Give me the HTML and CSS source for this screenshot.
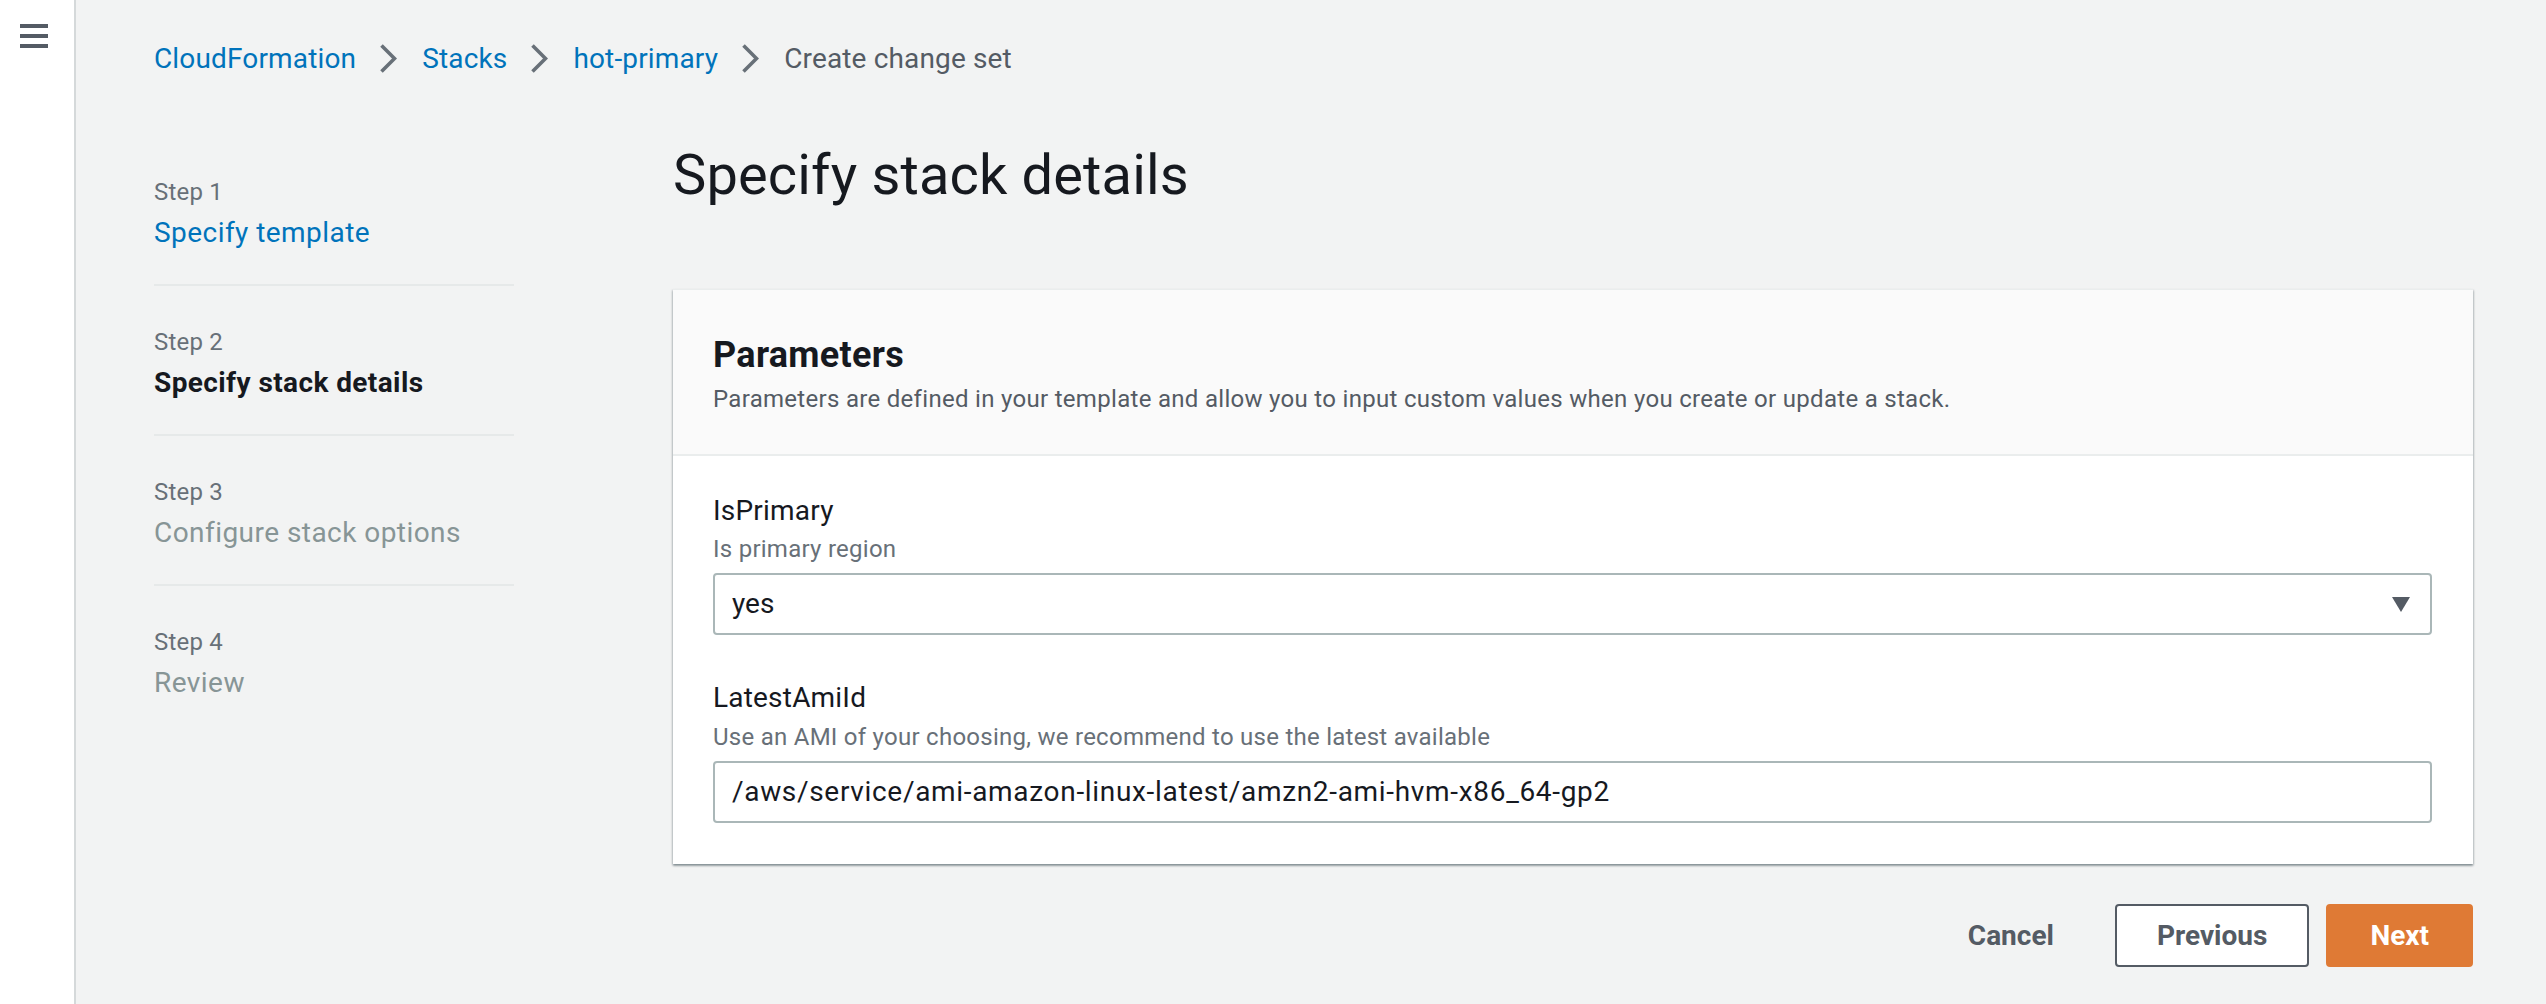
FILE: index.html
```html
<!DOCTYPE html>
<html lang="en">
<head>
<meta charset="utf-8">
<title>Create change set - CloudFormation</title>
<link rel="stylesheet" href="styles.css">
</head>
<body>
<div class="app">
  <nav class="sidenav">
    <svg class="hamburger" width="28" height="24" viewBox="0 0 28 24" aria-label="Open navigation">
      <rect x="0" y="0" width="28" height="4" fill="#545b64"/>
      <rect x="0" y="10" width="28" height="4" fill="#545b64"/>
      <rect x="0" y="20" width="28" height="4" fill="#545b64"/>
    </svg>
  </nav>
  <main class="main">
    <div class="breadcrumbs">
      <a class="crumb-link" href="#">CloudFormation</a>
      <svg class="chevron" width="17" height="29" viewBox="0 0 17 29"><path d="M1.5 1.5 L14.5 14.5 L1.5 27.5" fill="none" stroke="#687078" stroke-width="3.6"/></svg>
      <a class="crumb-link" href="#">Stacks</a>
      <svg class="chevron" width="17" height="29" viewBox="0 0 17 29"><path d="M1.5 1.5 L14.5 14.5 L1.5 27.5" fill="none" stroke="#687078" stroke-width="3.6"/></svg>
      <a class="crumb-link" href="#">hot-primary</a>
      <svg class="chevron" width="17" height="29" viewBox="0 0 17 29"><path d="M1.5 1.5 L14.5 14.5 L1.5 27.5" fill="none" stroke="#687078" stroke-width="3.6"/></svg>
      <span class="crumb-current">Create change set</span>
    </div>

    <div class="layout">
      <ol class="steps">
        <li class="step">
          <div class="step-label">Step 1</div>
          <a class="step-name step-link" href="#">Specify template</a>
        </li>
        <li class="step">
          <div class="step-label">Step 2</div>
          <div class="step-name step-active">Specify stack details</div>
        </li>
        <li class="step">
          <div class="step-label">Step 3</div>
          <div class="step-name step-disabled">Configure stack options</div>
        </li>
        <li class="step">
          <div class="step-label">Step 4</div>
          <div class="step-name step-disabled">Review</div>
        </li>
      </ol>

      <div class="content">
        <h1 class="page-title">Specify stack details</h1>

        <section class="card">
          <header class="card-header">
            <h2 class="card-title">Parameters</h2>
            <p class="card-desc">Parameters are defined in your template and allow you to input custom values when you create or update a stack.</p>
          </header>
          <div class="card-body">
            <div class="field">
              <div class="field-label">IsPrimary</div>
              <div class="field-desc">Is primary region</div>
              <div class="control select">
                <span class="control-value">yes</span>
                <svg class="caret" width="18" height="15" viewBox="0 0 18 15"><path d="M0 0 H18 L9 15 Z" fill="#545b64"/></svg>
              </div>
            </div>
            <div class="field field-second">
              <div class="field-label">LatestAmiId</div>
              <div class="field-desc field-desc-second">Use an AMI of your choosing, we recommend to use the latest available</div>
              <div class="control">
                <span class="control-value control-path">/aws/service/ami-amazon-linux-latest/amzn2-ami-hvm-x86_64-gp2</span>
              </div>
            </div>
          </div>
        </section>

        <div class="actions">
          <button class="btn btn-link" type="button">Cancel</button>
          <button class="btn btn-normal" type="button">Previous</button>
          <button class="btn btn-primary" type="button">Next</button>
        </div>
      </div>
    </div>
  </main>
</div>
</body>
</html>
```

FILE: styles.css
```css
* {
  box-sizing: border-box;
}

html, body {
  margin: 0;
  padding: 0;
}

body {
  background: #f2f3f3;
  font-family: Roboto, "Liberation Sans", Arial, sans-serif;
  color: #16191f;
}

.app {
  display: flex;
  min-height: 1004px;
}

.sidenav {
  flex: 0 0 76px;
  width: 76px;
  background: #ffffff;
  border-right: 2px solid #d5d9da;
  padding: 24px 0 0 20px;
}

.hamburger {
  display: block;
}

.main {
  flex: 1;
  padding: 39px 73px 0 78px;
}

.breadcrumbs {
  display: flex;
  align-items: center;
  height: 40px;
  font-size: 28px;
  line-height: 40px;
  letter-spacing: 0.15px;
}

.crumb-link {
  color: #0073bb;
  text-decoration: none;
}

.crumb-current {
  color: #545b64;
}

.chevron {
  display: block;
  margin: 0 25px 2px 24px;
}

.layout {
  display: grid;
  grid-template-columns: 360px 1fr;
  column-gap: 159px;
  margin-top: 57px;
}

.steps {
  list-style: none;
  margin: 0;
  padding: 0;
}

.step {
  padding: 40px 0 31px;
  border-bottom: 2px solid #e6e9e9;
}

.step:last-child {
  border-bottom: none;
}

.step-label {
  font-size: 24px;
  line-height: 32px;
  color: #687078;
  margin-bottom: 5px;
  letter-spacing: 0.2px;
}

.step-name {
  display: block;
  font-size: 28px;
  line-height: 40px;
  letter-spacing: 0.45px;
}

.step-link {
  color: #0073bb;
  text-decoration: none;
}

.step-active {
  font-weight: 700;
  color: #16191f;
  letter-spacing: 0.4px;
}

.step-disabled {
  color: #879596;
}

.content {
  min-width: 0;
}

.page-title {
  margin: 7px 0 0;
  font-size: 56px;
  line-height: 64px;
  font-weight: 400;
  color: #16191f;
  letter-spacing: 0.15px;
}

.card {
  margin-top: 82px;
  background: #ffffff;
  border-top: 1px solid #eaeded;
  box-shadow: 0 2px 2px 0 rgba(0, 28, 36, 0.3), 1px 1px 2px 0 rgba(0, 28, 36, 0.15), -1px 1px 2px 0 rgba(0, 28, 36, 0.15);
}

.card-header {
  background: #fafafa;
  padding: 43px 40px 39px;
  border-bottom: 2px solid #eaeded;
}

.card-title {
  margin: 0;
  font-size: 36px;
  line-height: 44px;
  font-weight: 700;
  color: #16191f;
  letter-spacing: 0.3px;
}

.card-desc {
  margin: 6px 0 0;
  font-size: 24px;
  line-height: 32px;
  color: #545b64;
  letter-spacing: 0.3px;
}

.card-body {
  padding: 35px 41px 41px 40px;
}

.field-second {
  margin-top: 43px;
}

.field-label {
  font-size: 28px;
  line-height: 40px;
  color: #16191f;
  letter-spacing: 0.2px;
}

.field-desc {
  margin-top: 2px;
  font-size: 24px;
  line-height: 32px;
  color: #687078;
  letter-spacing: 0.26px;
}

.field-desc-second {
  margin-top: 3px;
}

.control {
  margin-top: 8px;
  height: 62px;
  display: flex;
  align-items: center;
  justify-content: space-between;
  border: 2px solid #aab7b8;
  border-radius: 4px;
  background: #ffffff;
  padding: 0 20px 0 17px;
  font-size: 28px;
  line-height: 40px;
  color: #16191f;
}

.control-path {
  letter-spacing: 0.68px;
}

.caret {
  display: block;
  flex: 0 0 auto;
}

.actions {
  display: flex;
  justify-content: flex-end;
  gap: 17px;
  margin-top: 40px;
}

.btn {
  height: 63px;
  border: 2px solid transparent;
  border-radius: 4px;
  font-family: Roboto, "Liberation Sans", Arial, sans-serif;
  font-size: 28px;
  font-weight: 700;
  line-height: 40px;
  background: transparent;
  cursor: pointer;
}

.btn-link {
  color: #545b64;
  padding: 0 42px;
}

.btn-normal {
  color: #545b64;
  background: #ffffff;
  border-color: #545b64;
  padding: 0 40px;
}

.btn-primary {
  color: #ffffff;
  background: #df7a35;
  border-color: #df7a35;
  padding: 0 42px;
}
```
